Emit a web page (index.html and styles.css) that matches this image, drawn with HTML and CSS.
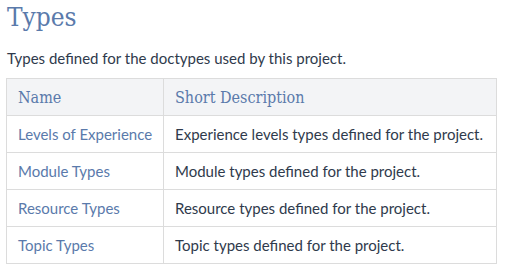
FILE: index.html
```html
<!DOCTYPE html>
<html>
<head>
<meta charset="utf-8">
<link rel="stylesheet" href="styles.css">
</head>
<body>
<main class="page">
  <h1 class="title">Types</h1>
  <p class="intro">Types defined for the doctypes used by this project.</p>
  <table class="types">
    <colgroup><col class="col-name"><col class="col-desc"></colgroup>
    <thead>
      <tr><th>Name</th><th>Short Description</th></tr>
    </thead>
    <tbody>
      <tr><td><a href="#">Levels of Experience</a></td><td>Experience levels types defined for the project.</td></tr>
      <tr><td><a href="#">Module Types</a></td><td>Module types defined for the project.</td></tr>
      <tr><td><a href="#">Resource Types</a></td><td>Resource types defined for the project.</td></tr>
      <tr><td><a href="#">Topic Types</a></td><td>Topic types defined for the project.</td></tr>
    </tbody>
  </table>
</main>
</body>
</html>
```
FILE: styles.css
```css
html, body { margin: 0; padding: 0; background: #fff; }
.page {
  padding: 0 11px 0 6px;
  font-family: Lato, "Open Sans", sans-serif;
  color: #2f3a4c;
}
.title {
  margin: 0;
  padding: 2px 0 0 1px;
  font-family: "DejaVu Serif Condensed", "DejaVu Serif", serif;
  font-weight: normal;
  font-size: 26px;
  line-height: 31px;
  color: #5a7aab;
}
.intro {
  margin: 16px 0 10px 1px;
  font-size: 15px;
  line-height: 19px;
}
.types {
  width: 491px;
  table-layout: fixed;
  border-collapse: collapse;
  font-size: 15px;
}
.types .col-name { width: 157px; }
.types th, .types td {
  border: 1px solid #dcdcdc;
  height: 36px;
  padding: 0 0 0 11px;
  white-space: nowrap;
  text-align: left;
  vertical-align: middle;
}
.types th {
  background: #f3f4f6;
  font-family: "DejaVu Serif Condensed", "DejaVu Serif", serif;
  font-weight: normal;
  font-size: 16px;
  color: #5a7aab;
}
.types a { color: #5a7aab; text-decoration: none; }
```
